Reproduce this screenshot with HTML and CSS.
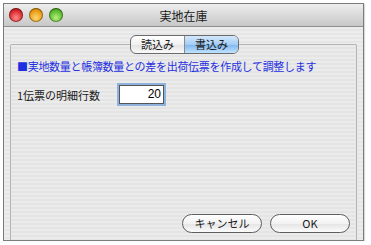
FILE: index.html
```html
<!DOCTYPE html>
<html>
<head>
<meta charset="utf-8">
<link rel="stylesheet" href="styles.css">
</head>
<body>
<div class="window">
  <div class="titlebar">
    <div class="lights">
      <span class="light red"></span>
      <span class="light yellow"></span>
      <span class="light green"></span>
    </div>
    <div class="title">実地在庫</div>
  </div>
  <div class="content">
    <div class="tabs">
      <span class="tab">読込み</span>
      <span class="tab selected">書込み</span>
    </div>
    <div class="panel">
      <p class="note">■実地数量と帳簿数量との差を出荷伝票を作成して調整します</p>
      <div class="field">
        <label class="label">1伝票の明細行数</label>
        <div class="input">20</div>
      </div>
      <div class="buttons">
        <button class="btn">キャンセル</button>
        <button class="btn">OK</button>
      </div>
    </div>
  </div>
</div>
</body>
</html>
```
FILE: styles.css
```css
html, body {
  margin: 0;
  padding: 0;
  background: #ffffff;
  font-family: "Noto Sans CJK JP", "Liberation Sans", sans-serif;
}
.window {
  margin: 3px 0 0 3px;
  width: 359px;
  height: 236px;
  border: 1px solid #7c7c7c;
  display: flex;
  flex-direction: column;
  background: #ececec;
  box-shadow: 1px 1px 1px rgba(0,0,0,0.15);
}
.titlebar {
  height: 22px;
  flex: none;
  display: flex;
  align-items: center;
  background: linear-gradient(#eeeeee, #dadada 50%, #c8c8c8);
  border-bottom: 1px solid #8e8e8e;
  position: relative;
}
.lights {
  display: flex;
  gap: 6px;
  padding-left: 5px;
}
.light {
  width: 14px;
  height: 14px;
  border-radius: 50%;
  display: block;
  box-shadow: inset 0 0 0 1px rgba(0,0,0,0.35);
}
.red { background: radial-gradient(circle at 50% 70%, #ff8a8a, #d8262a 60%, #8e0c10); }
.yellow { background: radial-gradient(circle at 50% 70%, #ffd770, #e99a12 60%, #a05c00); }
.green { background: radial-gradient(circle at 50% 70%, #b6f07c, #58b82e 60%, #2d7010); }
.title {
  position: absolute;
  left: 0;
  right: 0;
  text-align: center;
  font-size: 12px;
  color: #1a1a1a;
  pointer-events: none;
}
.content {
  flex: 1;
  display: flex;
  flex-direction: column;
  padding: 8px 6px 0 6px;
  background: repeating-linear-gradient(#ededed 0 2px, #e6e6e6 2px 4px);
  position: relative;
}
.tabs {
  align-self: center;
  display: flex;
  margin-left: 2px;
  height: 17px;
  border: 1px solid #6a6a6a;
  border-radius: 6px;
  overflow: hidden;
  position: relative;
  z-index: 1;
  margin-bottom: -10px;
  background: linear-gradient(#ffffff, #f0f0f0 50%, #e2e2e2 51%, #fafafa);
}
.tab {
  font-size: 11px;
  line-height: 17px;
  padding: 0 10px;
  color: #1a1a1a;
}
.tab + .tab { border-left: 1px solid #8a8a8a; }
.tab.selected {
  background: linear-gradient(#d4e8fb, #a3cdf5 50%, #7fb6ec 51%, #bfe3ff);
}
.panel {
  flex: 1;
  border: 1px solid #b4b4b4;
  border-bottom: none;
  border-radius: 2px 2px 0 0;
  padding: 13px 6px 0 6px;
  display: flex;
  flex-direction: column;
  background: repeating-linear-gradient(#ebebeb 0 2px, #e4e4e4 2px 4px);
}
.note {
  margin: 0;
  font-size: 11px;
  color: #1f2fe0;
  letter-spacing: -0.3px;
}
.field {
  display: flex;
  align-items: center;
  margin-top: 11px;
}
.label {
  font-size: 11px;
  color: #1a1a1a;
  width: 102px;
}
.input {
  width: 41px;
  height: 17px;
  background: #fff;
  border: 1px solid #555;
  box-shadow: 0 0 0 2px #8fb2dc;
  text-align: right;
  font-size: 12px;
  line-height: 17px;
  padding-right: 2px;
  color: #000;
  font-family: "Liberation Sans", sans-serif;
}
.buttons {
  margin-top: auto;
  margin-bottom: 7px;
  display: flex;
  justify-content: flex-end;
  gap: 8px;
}
.btn {
  width: 80px;
  height: 19px;
  border: 1px solid #5e5e5e;
  border-radius: 10px;
  background: linear-gradient(#ffffff, #f2f2f2 50%, #e4e4e4 51%, #fbfbfb);
  font-family: "Noto Sans CJK JP", "Liberation Sans", sans-serif;
  font-size: 11px;
  line-height: 17px;
  padding: 0;
  color: #1a1a1a;
}
```
